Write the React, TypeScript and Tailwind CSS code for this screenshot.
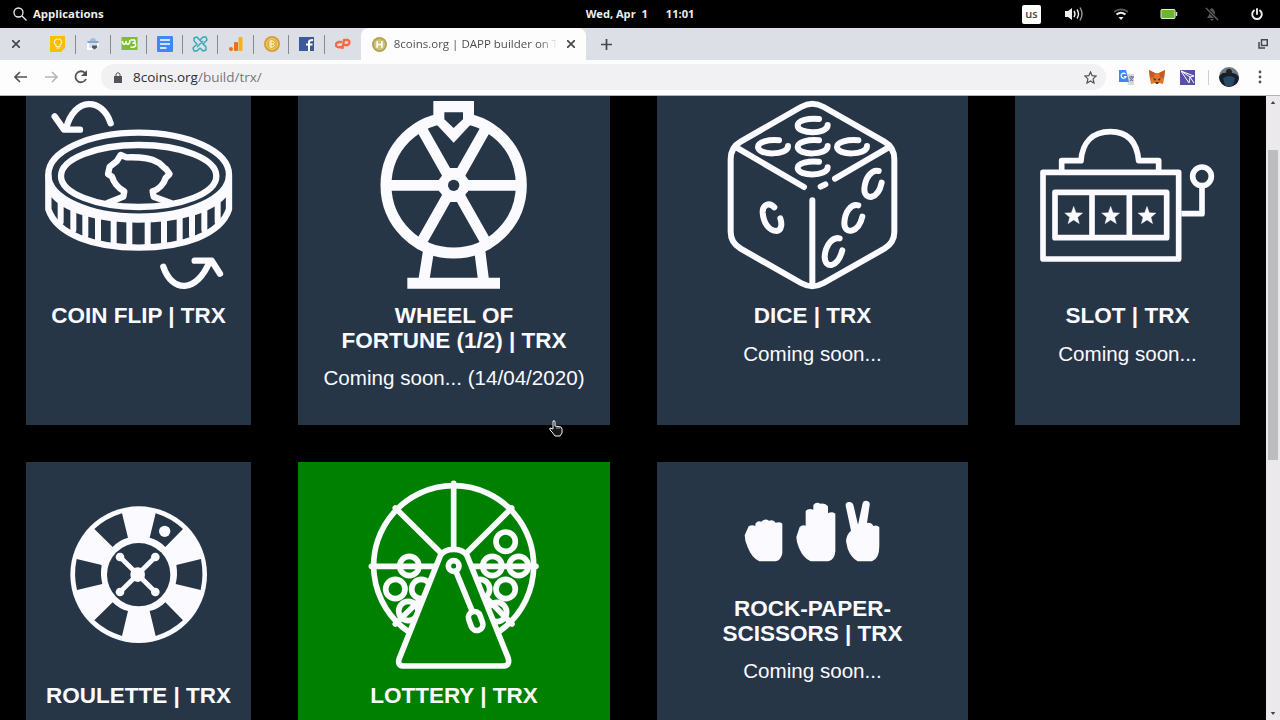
import type { ReactNode } from "react";

type GameCardProps = {
  title: ReactNode;
  note?: string;
  active?: boolean;
  children: ReactNode;
};

function CoinIcon() {
  return (
    <svg viewBox="0 0 675 624" className="h-[208px] w-full" fill="none" stroke="currentColor" strokeWidth="19" strokeLinecap="round" strokeLinejoin="round">
      <path d="M254 82C230 5 145 0 120 98M86 61L114 101H162" />
      <path d="M412 512C438 590 512 594 552 494M506 494H557L582 533" />
      <ellipse cx="338" cy="236" rx="271" ry="126" />
      <ellipse cx="338" cy="240" rx="233" ry="93" />
      <path d="M67 240V340C92 416 205 455 338 455S584 416 609 340V240" />
      <path d="M75 288C118 344 220 371 338 371S558 344 601 288" />
      <path
        d="M104 312V378M142 334V402M178 345V418M216 355V432M263 364V442M310 368V450M365 368V450M414 364V442M461 356V432M498 345V418M535 334V402M575 312V378"
        strokeWidth="18"
      />
      <path d="M245 321L292 302L295 286C275 276 262 256 258 242L246 234L251 212L272 196L284 177L302 184C338 183 370 184 392 197C406 202 409 214 420 219L431 234L419 246C414 262 400 280 380 286L383 302L434 321" />
    </svg>
  );
}

function WheelIcon() {
  return (
    <svg viewBox="-186 0 936 624" className="h-[208px] w-full" fill="none" stroke="currentColor" strokeWidth="33">
      <circle cx="281" cy="268" r="203" />
      <path d="M78 268H484M183 95L379 441M379 95L183 441" strokeWidth="32" />
      <path d="M220 15H342V75L281 140L220 75Z" fill="currentColor" stroke="none" />
      <path d="M253 49H309V70L281 96L253 70Z" fill="#273647" stroke="none" />
      <path d="M142 562H420M206 462L191 556M359 462L371 556" />
      <path d="M263 216H299L324 250V286L299 318H263L238 286V250Z" fill="currentColor" stroke="none" />
      <circle cx="281" cy="268" r="17" fill="#273647" stroke="none" />
    </svg>
  );
}

function DiceIcon() {
  return (
    <svg viewBox="-174 0 933 624" className="h-[208px] w-full" fill="none" stroke="currentColor" strokeWidth="18" strokeLinecap="round" strokeLinejoin="round">
      <path d="M258 33Q292 14 326 33L508 137Q538 154 538 190V408Q538 440 508 458L326 561Q292 580 258 561L77 458Q47 440 47 408V190Q47 154 77 137Z" />
      <path d="M60 152L267 273M525 152L360 248M317 272L331 265M292 313V564" />
      <path d="M312 69C280 66 248 73 248 89C248 115 338 116 338 87" />
      <path d="M192 133C160 130 129 138 129 153C129 179 219 179 219 150" />
      <path d="M312 133C280 130 248 138 248 153C248 179 338 179 338 150" />
      <path d="M430 133C398 130 366 138 366 153C366 179 456 179 456 150" />
      <path d="M312 197C280 194 248 201 248 216C248 242 338 242 338 214" />
      <path d="M178 334C162 317 142 327 143 350C146 382 162 405 185 405C201 403 201 382 196 367" />
      <path d="M491 225C470 219 450 246 448 279C448 314 489 312 500 260" />
      <path d="M430 328C407 322 389 350 388 382C388 416 430 413 442 362" />
      <path d="M374 427C350 422 331 451 329 482C330 521 368 515 382 463" />
    </svg>
  );
}

function SlotIcon() {
  return (
    <svg viewBox="-15 -42 675 624" className="h-[208px] w-full" fill="none" stroke="currentColor" strokeWidth="17" strokeLinejoin="round">
      <path d="M69 187H476V447H69ZM105 247H440V383H105ZM216 247V383M328 247V383" />
      <path d="M125 187V152H183C187 98 217 65 271 65S351 98 356 152H416V187M484 311H546V234" />
      <circle cx="546" cy="199" r="28" />
      {[161, 272, 381].map((x) => (
        <path
          key={x}
          transform={`translate(${x} 317)`}
          d="M0-28L7-9L27-8L12 5L17 24L0 13L-17 24L-12 5L-27-8L-7-9Z"
          fill="currentColor"
          strokeWidth="1"
        />
      ))}
    </svg>
  );
}

function RouletteIcon() {
  return (
    <svg viewBox="-72 -84 675 666" className="h-[222px] w-full">
      <circle cx="266" cy="254" r="205" fill="currentColor" />
      <g fill="#273647">
        <path d="M133 117Q169 84 216 70L234 143Q207 150 188 171Z" />
        <path d="M317 70Q363 84 399 117L346 171Q327 150 299 143Z" />
        <path d="M80 207L155 225Q150 254 157 282L81 300Q70 254 80 207Z" />
        <path d="M453 207L379 225Q384 254 377 282L452 300Q462 254 453 207Z" />
        <path d="M188 337Q207 357 234 363L216 438Q169 424 133 391Z" />
        <path d="M346 337Q327 357 299 363L317 438Q363 424 399 391Z" />
        <circle cx="266" cy="254" r="95" />
      </g>
      <g fill="currentColor">
        <path d="M210 201L316 306M316 201L210 306" stroke="currentColor" strokeWidth="14" />
        <circle cx="344" cy="124" r="17" />
        <circle cx="263" cy="254" r="22" />
        <circle cx="210" cy="201" r="13" />
        <circle cx="316" cy="201" r="13" />
        <circle cx="210" cy="306" r="13" />
        <circle cx="316" cy="306" r="13" />
      </g>
    </svg>
  );
}

function LotteryIcon() {
  return (
    <svg viewBox="-186 -24 936 666" className="h-[222px] w-full" fill="none" stroke="currentColor" strokeWidth="17" strokeLinecap="round" strokeLinejoin="round">
      <path d="M144 484A240 240 0 1 1 418 484" />
      <path d="M281 40V240M106 114L242 248M455 114L320 248M34 289H228M334 289H528M106 462L182 388M456 462L383 388" />
      <circle cx="148" cy="288" r="29" />
      <circle cx="106" cy="357" r="29" />
      <circle cx="184" cy="357" r="29" />
      <circle cx="145" cy="423" r="29" />
      <circle cx="437" cy="215" r="29" />
      <circle cx="397" cy="288" r="29" />
      <circle cx="476" cy="288" r="29" />
      <circle cx="437" cy="357" r="29" />
      <circle cx="360" cy="357" r="29" />
      <circle cx="411" cy="426" r="29" />
      <path d="M241 257Q252 238 281 238T321 257L444 563Q452 588 428 588H133Q110 588 118 565Z" fill="#008000" />
      <circle cx="281" cy="288" r="16" />
      <path d="M289 307L336 422" />
      <rect x="-18" y="-29" width="36" height="58" rx="18" transform="translate(347 453) rotate(-20)" />
    </svg>
  );
}

function HandsIcon() {
  return (
    <svg viewBox="-219 -84 933 405" className="h-[135px] w-full" fill="currentColor">
      <path d="M44 136L56 109Q66 103 76 108V101Q83 91 94 95Q105 83 117 92Q130 88 137 98Q150 94 157 101V190Q153 211 137 214H88Q66 205 53 172Q44 153 44 136Z" />
      <path d="M199 141L209 111Q216 104 227 107V63Q235 54 250 59V45Q259 34 271 41Q286 38 294 49V70Q305 63 316 71V184Q314 210 295 214H242Q220 205 207 174Q199 156 199 141Z" />
      <path d="M348 153Q350 132 363 122L347 47Q346 37 356 36Q367 34 370 44L384 104L398 39Q401 30 412 33Q421 35 419 45L411 99Q424 96 430 108Q442 104 448 112V168Q448 206 426 214H383Q363 203 353 176Z" />
    </svg>
  );
}

function GameCard({ title, note, active, children }: GameCardProps) {
  return (
    <article className={`flex flex-col items-center text-center text-[#fafaff] ${active ? "bg-[#008000]" : "bg-[#273647]"}`}>
      {children}
      <h2 className="text-[22.5px] leading-[24.6px] font-bold whitespace-nowrap">{title}</h2>
      {note && <p className="mt-[13px] text-[20.6px] leading-6 whitespace-nowrap">{note}</p>}
    </article>
  );
}

const favicons = [
  <svg viewBox="0 0 16 16" className="size-4">
    <path d="M0 0h15v12l-4 4H0z" fill="#fbbc05" />
    <path d="M6 10.500V9C2.500 6 5 3 8 3s5.500 3 2 6v1.500zM6 12h4" fill="none" stroke="#fff2b5" strokeWidth="1.200" />
  </svg>,
  <svg viewBox="0 0 16 16" className="size-4">
    <path d="M3 7V13h4M13 7v3" fill="none" stroke="#fff" strokeWidth="2" />
    <path d="M5 5C5 1 11 1 11 5" fill="#a8bcd5" />
    <path d="M2.500 6h11" stroke="#5c96d1" strokeWidth="1.500" />
    <path d="M7 9.500h5v2l-2.500 2-2.500-2z" fill="#4c5967" />
  </svg>,
  <svg viewBox="0 0 16 16" className="h-4 w-[17px]">
    <path d="M0 1h16v13H0z" fill="#7dbd2e" />
    <path d="M1 5q0 4 2.500 3Q5 7 4.500 5q0 4 2.500 3Q9 7 8 4M9 4h4q2 3-2 3 4 0 3 3-2 2-5 1" fill="none" stroke="#fff" strokeWidth="1.500" />
  </svg>,
  <svg viewBox="0 0 16 16" className="size-4">
    <rect width="16" height="16" rx="1" fill="#4286f5" />
    <path d="M3 4h10M3 8h10M3 12h6.500" stroke="#fff" strokeWidth="1.700" />
  </svg>,
  <svg viewBox="0 0 16 16" className="size-4" fill="none" stroke="#36a7b4" strokeWidth="1.400" strokeLinejoin="round">
    <path d="M5 11L11 5M2 5l3 3-4 4 1 3h3l3-3M14 11l-3-3 4-4-1-3h-3L8 4M2 5V2l3-1 9 10v3l-3 1-3-3" />
  </svg>,
  <svg viewBox="0 0 16 16" className="size-4">
    <rect x="1" y="11" width="4" height="4" rx="2" fill="#e8711a" />
    <rect x="6" y="6" width="4" height="9" rx="1" fill="#e8711a" />
    <rect x="10.500" y="1" width="4" height="14" rx="1" fill="#fbb01b" />
  </svg>,
  <svg viewBox="0 0 16 16" className="size-4">
    <circle cx="8" cy="8" r="8" fill="#d7a136" />
    <circle cx="8" cy="8" r="5.500" fill="#dfb14c" stroke="#f0cf7b" />
    <path d="M6 5h3q3 1 0 3 3 1 0 3H6zM6 8h3M7 4v8" fill="none" stroke="#fff3bf" />
  </svg>,
  <svg viewBox="0 0 16 16" className="size-4">
    <path d="M0 1h15v14H0z" fill="#3b5998" />
    <path d="M10 15V6q0-2 4-2M7 8.500h6.500" fill="none" stroke="#fff" strokeWidth="2" />
  </svg>,
  <svg viewBox="0 0 16 16" className="size-4" fill="none" stroke="#f66a43" strokeWidth="2.400" strokeLinecap="round" strokeLinejoin="round">
    <path d="M6 6H4Q0 7 1 10q2 2 5 1M7.500 12L9 4h4q3 2 0 5H9" />
  </svg>,
];

function TopPanel() {
  return (
    <header className="grid h-7 grid-cols-3 items-center bg-black text-[11.4px] font-bold text-[#eee]">
      <div className="flex items-center gap-[6px] pl-[13px]">
        <svg viewBox="0 0 14 14" className="size-[14px]" fill="none" stroke="currentColor" strokeWidth="1.300">
          <circle cx="5.500" cy="5.500" r="4.500" />
          <path d="M9 9l4.500 4.500" />
        </svg>
        <span>Applications</span>
      </div>
      <div className="flex justify-center gap-[18px] text-[11.1px] whitespace-pre">
        <span>Wed, Apr  1</span>
        <span>11:01</span>
      </div>
      <div className="flex items-center justify-end pr-[17px]">
        <span className="mr-[24px] grid size-[19px] place-items-center rounded-[2px] bg-white pb-px text-[11px] leading-none font-semibold text-[#444]">us</span>
        <svg viewBox="0 0 18 16" className="mr-[31px] h-4 w-[18px]" fill="none" stroke="currentColor" strokeWidth="1.400">
          <path d="M0 5h3l4-3v12l-4-3H0z" fill="currentColor" stroke="none" />
          <path d="M9 5q2 3 0 6M12 3.500q3 4.500 0 9" />
          <path d="M15 1.500q4 6.500 0 13" stroke="#999" />
        </svg>
        <svg viewBox="0 0 14 12" className="mr-[32px] h-3 w-[14px]" fill="none" stroke="currentColor" strokeWidth="2">
          <path d="M0 4Q7-1 14 4" stroke="#555" />
          <path d="M2.500 6.500Q7 3 11.500 6.500" />
          <path d="M4.500 9h5L7 12z" fill="currentColor" stroke="none" />
        </svg>
        <svg viewBox="0 0 18 10" className="mr-[27px] h-[10px] w-[18px]">
          <rect x="1" y=".500" width="14" height="9" rx="1" fill="#68b723" stroke="#e1eed5" />
          <path d="M16.500 3v4" stroke="#ddd" strokeWidth="1.500" />
        </svg>
        <svg viewBox="0 0 14 14" className="mr-[32px] size-[14px]">
          <path d="M2 11h10l-2-3V5Q9 2 7 1 4 2 4 5v3zM5 12h4l-2 2z" fill="#555" />
          <path d="M1 1l12 12" stroke="#000" strokeWidth="3" />
          <path d="M1 1l12 12" stroke="#666" strokeWidth="1.200" />
        </svg>
        <svg viewBox="0 0 12 12" className="size-[12px]" fill="none" stroke="currentColor" strokeWidth="1.900" strokeLinecap="round">
          <path d="M3 2.500a4.800 4.800 0 1 0 6 0M6 1v5" />
        </svg>
      </div>
    </header>
  );
}

function TabStrip() {
  return (
    <div className="flex h-8 items-center bg-[#dcdfe6] text-[#45484c]">
      <div className="flex w-[40px] shrink-0 pl-[12px]">
        <svg viewBox="0 0 8 8" className="size-2" stroke="currentColor" strokeWidth="1.700">
          <path d="M0 0l8 8M8 0L0 8" />
        </svg>
      </div>
      {favicons.map((icon, i) => (
        <div key={i} className="flex h-[19px] w-[35.65px] shrink-0 items-center justify-center border-r border-[#858990] pl-px [&:nth-child(10)]:border-transparent">
          {icon}
        </div>
      ))}
      <div className="flex h-8 w-[225px] shrink-0 items-center rounded-t-lg bg-[#fefdfe] pl-[11px] text-[11.5px]">
        <svg viewBox="0 0 16 16" className="mr-[7px] size-[15px] shrink-0">
          <circle cx="8" cy="8" r="8" fill="#b3a252" />
          <circle cx="8" cy="8" r="6" fill="#cfc381" />
          <path d="M5.500 4.500v7M10.500 4.500v7M5.500 8h5" stroke="#fff" strokeWidth="1.800" />
        </svg>
        <span className="w-[164px] bg-linear-to-r from-[#45484c] from-88% to-transparent bg-clip-text whitespace-nowrap text-transparent">
          8coins.org | DAPP builder on Tr
        </span>
        <svg viewBox="0 0 8 8" className="ml-[9px] size-2" stroke="currentColor" strokeWidth="1.700">
          <path d="M0 0l8 8M8 0L0 8" />
        </svg>
      </div>
      <svg viewBox="0 0 12 12" className="ml-[15px] size-[11px]" stroke="currentColor" strokeWidth="1.900">
        <path d="M6 0v12M0 6h12" />
      </svg>
      <svg viewBox="0 0 10 10" className="mr-[12px] ml-auto size-[10px]" fill="none" stroke="currentColor" strokeWidth="1.500">
        <path d="M3.500.700h5.800v5.800H3.500zM1 3v6h6" />
      </svg>
    </div>
  );
}

function Toolbar() {
  return (
    <div className="flex h-9 items-center border-b border-[#aeb3ba] bg-[#fefdfe] pb-px text-[#505357]">
      <svg viewBox="0 0 14 12" className="ml-[14px] h-3 w-[14px]" fill="none" stroke="currentColor" strokeWidth="1.600">
        <path d="M13 6H1M6 1L1 6l5 5" />
      </svg>
      <svg viewBox="0 0 14 12" className="ml-[16px] h-3 w-[14px]" fill="none" stroke="#b5b7ba" strokeWidth="1.600">
        <path d="M1 6h12M8 1l5 5-5 5" />
      </svg>
      <svg viewBox="0 0 14 14" className="ml-[16px] size-[14px]" fill="none" stroke="currentColor" strokeWidth="1.800">
        <path d="M12 9A5.500 5.500 0 1 1 11 3l1 2" />
        <path d="M13 0v6H7z" fill="currentColor" stroke="none" />
      </svg>
      <div className="ml-[13px] flex h-[26px] w-[1005px] items-center rounded-full bg-[#f1f1f4] pr-[9px] pl-[13px]">
        <svg viewBox="0 0 8 11" className="h-[11px] w-2">
          <path d="M0 4h8v7H0z" fill="currentColor" />
          <path d="M2 4V2q2-3 4 0v2" fill="none" stroke="currentColor" />
        </svg>
        <p className="ml-[11px] text-[13.5px] leading-5 text-[#2c2e31]">
          8coins.org<span className="text-[#75777b]">/build/trx/</span>
        </p>
        <svg viewBox="0 0 14 14" className="ml-auto size-[13px]" fill="none" stroke="currentColor" strokeWidth="1.300">
          <path d="M7 1l1.800 4 4.200.500-3.200 3 1 4.500L7 10.700 3.200 13l1-4.500-3.200-3L5.200 5z" />
        </svg>
      </div>
      <svg viewBox="0 0 15 15" className="ml-[13px] size-[15px]">
        <path d="M7 4h8v11H9z" fill="#d5d8dc" />
        <path d="M0 0h7l3 12H0z" fill="#4285f4" />
        <path d="M6.500 4a2.500 2.500 0 1 0 .500 2.500H5" fill="none" stroke="#fff" strokeWidth="1.200" />
        <path d="M10 7h5M12.500 6v1M14 7q-1 3-3 4M11 8q1 2 3 3" fill="none" stroke="#667" />
      </svg>
      <svg viewBox="0 0 16 15" className="ml-[15px] h-[15px] w-4">
        <path d="M0 0l6 3h4l6-3-1 9-1 5-4-1H6l-4 1-1-5z" fill="#e57627" />
        <path d="M0 0l6 3-1 4-4 1zM16 0l-6 3 1 4 4 1z" fill="#bd5c27" />
        <path d="M4 8l3 1-1 2zM12 8l-3 1 1 2z" fill="#38302d" />
        <path d="M6 12h4l-1 2H7z" fill="#463c38" />
      </svg>
      <svg viewBox="0 0 15 15" className="ml-[15px] size-[15px]" fill="none" stroke="#fff">
        <path d="M0 0h15v15H0z" fill="#5950aa" stroke="none" />
        <path d="M1 1l8 12 1-6 4-1zM1 1l9 6M10 7l4 6" />
      </svg>
      <div className="ml-[13px] h-[15px] w-px bg-[#ced0d3]" />
      <svg viewBox="0 0 20 20" className="ml-[10px] size-5">
        <circle cx="10" cy="10" r="10" fill="#6d7c86" />
        <path d="M0 10q3-5 7-4h7q5 1 6 5-1 8-10 9Q1 19 0 10" fill="#171e2b" />
        <path d="M4 11q6-4 12 0l-2 7q-4 3-8 0z" fill="#294866" />
        <circle cx="10" cy="5" r="3" fill="#241f24" />
      </svg>
      <svg viewBox="0 0 4 14" className="ml-[19px] h-[14px] w-1" fill="currentColor">
        <circle cx="2" cy="2" r="1.400" />
        <circle cx="2" cy="7" r="1.400" />
        <circle cx="2" cy="12" r="1.400" />
      </svg>
    </div>
  );
}

export default function App() {
  return (
    <div className="relative flex h-[720px] w-[1280px] flex-col overflow-hidden bg-black font-['Open_Sans',sans-serif]">
      <TopPanel />
      <TabStrip />
      <Toolbar />
      <div className="flex min-h-0 flex-1">
        <main className="grid w-[1266px] grid-cols-[225px_312px_311px_225px] grid-rows-[328.5px_300px] gap-x-[47px] gap-y-[37.5px] pl-[26px] font-['Liberation_Sans',Arial,sans-serif]">
          <GameCard title="COIN FLIP | TRX">
            <CoinIcon />
          </GameCard>
          <GameCard title={<>WHEEL OF<br />FORTUNE (1/2) | TRX</>} note="Coming soon... (14/04/2020)">
            <WheelIcon />
          </GameCard>
          <GameCard title="DICE | TRX" note="Coming soon...">
            <DiceIcon />
          </GameCard>
          <GameCard title="SLOT | TRX" note="Coming soon...">
            <SlotIcon />
          </GameCard>
          <GameCard title="ROULETTE | TRX">
            <RouletteIcon />
          </GameCard>
          <GameCard title="LOTTERY | TRX" active>
            <LotteryIcon />
          </GameCard>
          <GameCard title={<>ROCK-PAPER-<br />SCISSORS | TRX</>} note="Coming soon...">
            <HandsIcon />
          </GameCard>
        </main>
        <div className="flex w-[14px] flex-col items-center bg-[#ebe9ec]">
          <svg viewBox="0 0 6 4" className="mt-[5px] h-[3px] w-[6px]">
            <path d="M0 4l3-4 3 4z" fill="#414347" />
          </svg>
          <div className="mt-[46px] h-[310px] w-[10px] bg-[#bdbdc0]" />
          <svg viewBox="0 0 6 4" className="mt-auto mb-[5px] h-[3px] w-[6px]">
            <path d="M0 0l3 4 3-4z" fill="#414347" />
          </svg>
        </div>
      </div>
      <svg viewBox="0 0 14 17" className="absolute top-[420px] left-[549px] h-[17px] w-[14px]">
        <path d="M4 1q2-1 2 1v4l6 1 1 2v4l-2 3H6L3 12 1 10V8l3 1z" fill="#17171b" stroke="#f4f4f5" strokeLinejoin="round" />
        <path d="M8 7v2M10 7v2" stroke="#ddd" strokeWidth=".700" />
      </svg>
    </div>
  );
}
